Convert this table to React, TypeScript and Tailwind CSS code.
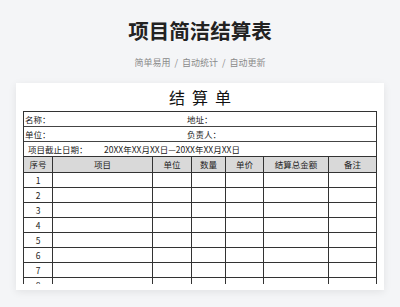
const font = { fontFamily: '"Noto Sans CJK SC", "Noto Sans", sans-serif' };

const cols = "grid grid-cols-[29px_100px_39px_34px_38px_65px_1fr]";
const headers = ["序号", "项目", "单位", "数量", "单价", "结算总金额", "备注"];
const rows = [1, 2, 3, 4, 5, 6, 7, 8];

const Cell = ({ children, last }: { children?: React.ReactNode; last?: boolean }) => (
  <div
    className={`flex items-center justify-center leading-none ${
      last ? "" : "border-r border-[#333]"
    }`}
  >
    {children}
  </div>
);

const App = () => {
  return (
    <div className="w-[400px] h-[307px] overflow-hidden bg-[#f4f5f7] flex flex-col items-center" style={font}>
      <h1 className="mt-[18px] text-[20.5px] leading-[24px] font-bold text-[#222]">项目简洁结算表</h1>
      <p className="mt-[15px] text-[9px] leading-[12px] text-[#8a8a8a] flex gap-[4px]">
        <span>简单易用</span>
        <span>/</span>
        <span>自动统计</span>
        <span>/</span>
        <span>自动更新</span>
      </p>

      <div className="mt-[14px] w-[368px] bg-white px-[7px] pb-[6px] shadow-[0_2px_8px_rgba(0,0,0,0.08)]">
        <div className="h-[28px] flex items-center justify-center gap-[7px] text-[16px] text-[#111]">
          <span>结</span>
          <span>算</span>
          <span>单</span>
        </div>

        <div className="h-[173px] overflow-hidden">
          <div className="border-t border-l border-r border-[#333] text-[8.5px] text-[#222]">
            <div className="h-[15px] border-b border-[#444] flex items-center leading-none">
              <span className="w-[163px] pl-[1px]">名称：</span>
              <span>地址：</span>
            </div>
            <div className="h-[15px] border-b border-[#444] flex items-center leading-none">
              <span className="w-[163px] pl-[1px]">单位：</span>
              <span>负责人：</span>
            </div>
            <div className="h-[15px] border-b border-[#333] flex items-center leading-none">
              <span className="w-[80px] pl-[4px]">项目截止日期：</span>
              <span>20XX年XX月XX日—20XX年XX月XX日</span>
            </div>

            <div className={`${cols} h-[16px] bg-[#d9d9d9] border-b border-[#333]`}>
              {headers.map((h, i) => (
                <Cell key={h} last={i === headers.length - 1}>
                  {h}
                </Cell>
              ))}
            </div>

            {rows.map((n) => (
              <div key={n} className={`${cols} h-[15px] border-b border-[#333]`}>
                <Cell>{n}</Cell>
                <Cell />
                <Cell />
                <Cell />
                <Cell />
                <Cell />
                <Cell last />
              </div>
            ))}
          </div>
        </div>
      </div>
    </div>
  );
};

export default App;
